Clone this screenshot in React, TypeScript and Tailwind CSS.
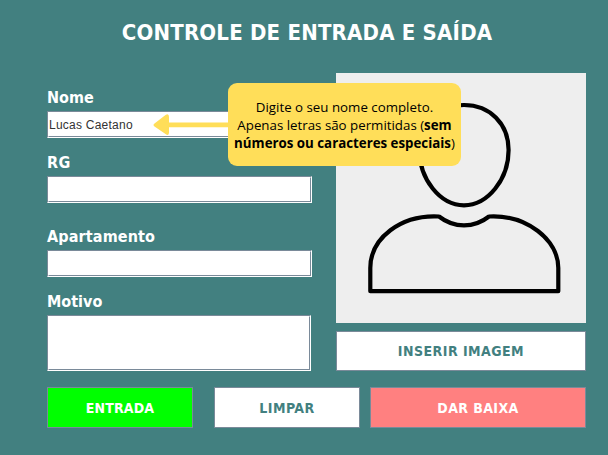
import type { ReactNode } from "react";

const tahoma = "font-['DejaVu_Sans_Condensed','DejaVu_Sans',sans-serif] font-bold [font-stretch:condensed]";

type FieldProps = {
  label: string;
  tracking: string;
  box: string;
  className?: string;
  children?: ReactNode;
};

function Field({ label, tracking, box, className = "", children }: FieldProps) {
  return (
    <div className={`flex flex-col ${className}`}>
      <label className={`h-[25px] text-[16px] leading-6 whitespace-nowrap text-white ${tahoma} ${tracking}`}>
        {label}
      </label>
      <div className={`border border-t-[#7a8a99] border-r-white border-b-white border-l-[#7a8a99] bg-white ${box}`}>
        <div className="flex h-full items-center border border-t-white border-r-[#7a8a99] border-b-[#7a8a99] border-l-white">
          {children}
        </div>
      </div>
    </div>
  );
}

function Button({ className, children }: { className: string; children: ReactNode }) {
  return (
    <button className={`border border-[#7a8a99] pt-px text-[14px] whitespace-nowrap ${tahoma} ${className}`}>
      {children}
    </button>
  );
}

function Portrait() {
  return (
    <svg viewBox="0 0 250 250" className="block h-[250px] w-[250px] bg-[#eeeeee]" fill="none" stroke="#000" strokeWidth="4.2" strokeLinejoin="round">
      <path d="M128 32C154 32 172.600 51 172.600 77C172.600 106 152 132.300 128 132.300C104 132.300 83.400 106 83.400 77C83.400 51 102 32 128 32Z" />
      <path d="M34.300 218.200V195C34.300 165 65 141.500 103 143.500C118 155.300 138 155.300 153 143.500C191 141.500 222.300 167 222.300 195V218.200Z" />
    </svg>
  );
}

function Hint() {
  return (
    <div className="absolute top-[83px] left-[153px] flex h-[83px] w-[308px] items-center">
      <svg viewBox="0 0 75 22" className="h-[22px] w-[75px] shrink-0" fill="#ffde59">
        <path d="M1.500 9.500L12.500 1Q16 -1 16 3V8.500H75V13.300H16V18.500Q16 22.500 12.500 20L1.500 12.500Q-.5 11 1.500 9.500Z" />
      </svg>
      <p className="flex h-full w-[233px] shrink-0 flex-col justify-center rounded-[9px] bg-[#ffde59] pt-px text-center font-['Open_Sans',sans-serif] text-[13.3px] leading-[18px] whitespace-nowrap text-black">
        <span>Digite o seu nome completo.</span>
        <span>Apenas letras são permitidas (<b>sem</b></span>
        <span><b>números ou caracteres especiais</b>)</span>
      </p>
    </div>
  );
}

export default function App() {
  return (
    <main className="relative h-[455px] w-[608px] overflow-hidden bg-[#428080]">
      <h1 className={`h-[73px] pt-[18px] pl-[6px] text-center text-[22px] leading-[30px] tracking-[0.2px] whitespace-nowrap text-white ${tahoma}`}>
        CONTROLE DE ENTRADA E SAÍDA
      </h1>
      <div className="flex h-[298px] pr-[22px] pl-[47px]">
        <section className="w-[289px] pt-[13px]">
          <Field label="Nome" tracking="tracking-normal" box="h-[27px] w-[265px]">
            <span className="font-['Liberation_Sans',Arial,sans-serif] text-[12px] leading-4 tracking-[0.24px] text-[#333]">Lucas Caetano</span>
          </Field>
          <Field label="RG" tracking="tracking-[0.4px]" box="h-[27px] w-[265px]" className="mt-[13px]" />
          <Field label="Apartamento" tracking="tracking-[0.13px]" box="h-[27px] w-[265px]" className="mt-[22px]" />
          <Field label="Motivo" tracking="tracking-normal" box="h-[56px] w-[264px]" className="mt-[13px]" />
        </section>
        <section className="flex w-[250px] flex-col justify-between">
          <Portrait />
          <Button className="h-[40px] bg-white tracking-[0.46px] text-[#428080]">INSERIR IMAGEM</Button>
        </section>
      </div>
      <div className="flex pt-4 pl-[47px]">
        <Button className="h-[41px] w-[146px] bg-[#00ff00] tracking-[0.15px] text-white">ENTRADA</Button>
        <Button className="ml-[21px] h-[41px] w-[146px] bg-white tracking-[0.5px] text-[#428080]">LIMPAR</Button>
        <Button className="ml-[10px] h-[41px] w-[216px] bg-[#ff8080] tracking-[0.4px] text-white">DAR BAIXA</Button>
      </div>
      <Hint />
    </main>
  );
}
